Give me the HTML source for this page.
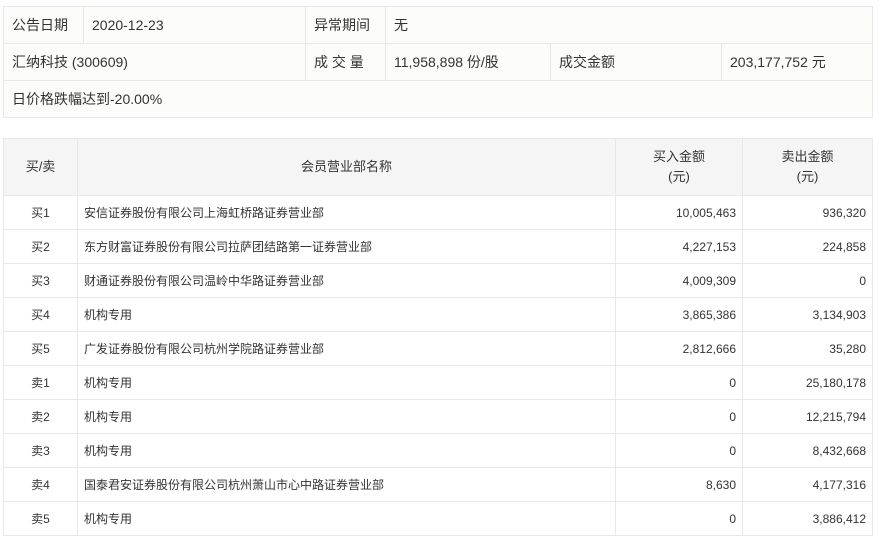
<!DOCTYPE html>
<html><head><meta charset="utf-8"><style>
body{margin:0;background:#fff;font-family:"Liberation Sans","Noto Sans CJK SC",sans-serif;color:#333;}
table{border-collapse:collapse;position:absolute;table-layout:fixed;}
td{border:1px solid #e8e8e8;padding:0;}
#t1{left:3px;top:6px;width:869px;background:#fcfcfa;font-size:14px;}
#t1 td{height:36px;padding-left:8px;}
#t2{left:3px;top:138px;width:869px;font-size:12px;}
#t2 td{height:33px;}
#t2 tr.h td{background:#f5f5f5;height:56px;text-align:center;font-size:13px;line-height:20px;}
.c{text-align:center}.r{text-align:right;padding-right:6px}.l{padding-left:6px}
</style></head><body>
<table id="t1">
<colgroup><col style="width:80px"><col style="width:222px"><col style="width:80px"><col style="width:165px"><col style="width:171px"><col style="width:151px"></colgroup>
<tr><td>公告日期</td><td>2020-12-23</td><td>异常期间</td><td colspan="3" style="border-right-color:#e8e8e8">无</td></tr>
<tr><td colspan="2">汇纳科技 (300609)</td><td>成 交 量</td><td>11,958,898 份/股</td><td>成交金额</td><td>203,177,752 元</td></tr>
<tr><td colspan="6">日价格跌幅达到-20.00%</td></tr>
</table>
<table id="t2">
<colgroup><col style="width:74px"><col style="width:538px"><col style="width:127px"><col style="width:130px"></colgroup>
<tr class="h"><td>买/卖</td><td>会员营业部名称</td><td>买入金额<br>(元)</td><td>卖出金额<br>(元)</td></tr>
<tr><td class="c">买1</td><td class="l">安信证券股份有限公司上海虹桥路证券营业部</td><td class="r">10,005,463</td><td class="r">936,320</td></tr>
<tr><td class="c">买2</td><td class="l">东方财富证券股份有限公司拉萨团结路第一证券营业部</td><td class="r">4,227,153</td><td class="r">224,858</td></tr>
<tr><td class="c">买3</td><td class="l">财通证券股份有限公司温岭中华路证券营业部</td><td class="r">4,009,309</td><td class="r">0</td></tr>
<tr><td class="c">买4</td><td class="l">机构专用</td><td class="r">3,865,386</td><td class="r">3,134,903</td></tr>
<tr><td class="c">买5</td><td class="l">广发证券股份有限公司杭州学院路证券营业部</td><td class="r">2,812,666</td><td class="r">35,280</td></tr>
<tr><td class="c">卖1</td><td class="l">机构专用</td><td class="r">0</td><td class="r">25,180,178</td></tr>
<tr><td class="c">卖2</td><td class="l">机构专用</td><td class="r">0</td><td class="r">12,215,794</td></tr>
<tr><td class="c">卖3</td><td class="l">机构专用</td><td class="r">0</td><td class="r">8,432,668</td></tr>
<tr><td class="c">卖4</td><td class="l">国泰君安证券股份有限公司杭州萧山市心中路证券营业部</td><td class="r">8,630</td><td class="r">4,177,316</td></tr>
<tr><td class="c">卖5</td><td class="l">机构专用</td><td class="r">0</td><td class="r">3,886,412</td></tr>
</table>
</body></html>
